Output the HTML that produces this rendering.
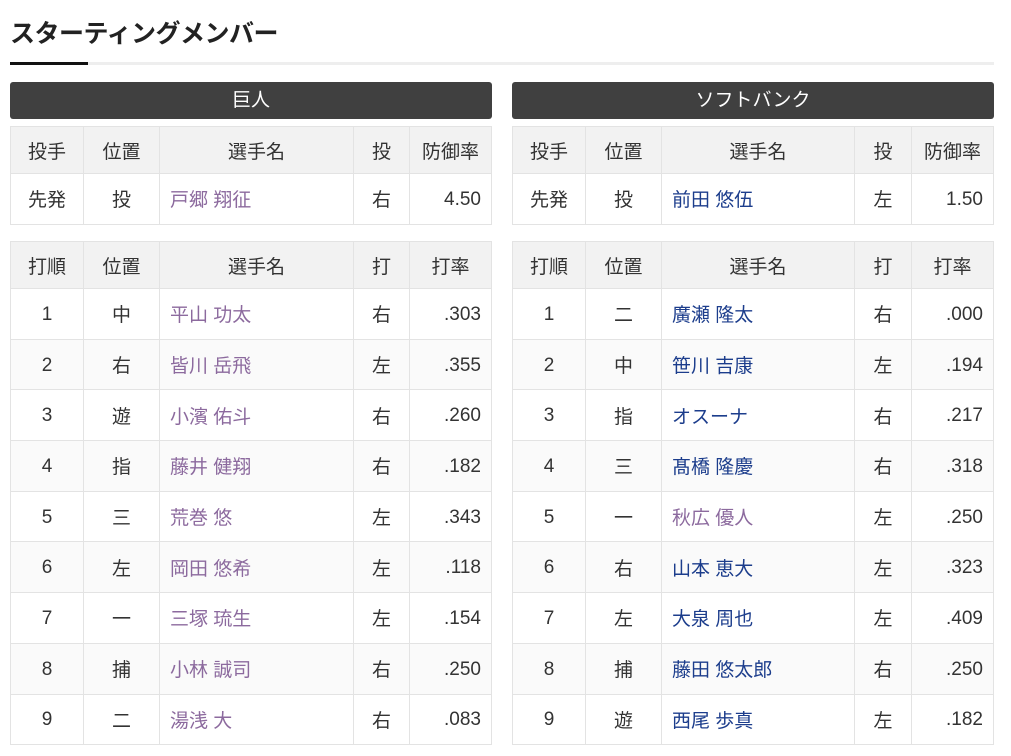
<!DOCTYPE html>
<html><head><meta charset="utf-8"><style>
body{margin:0;background:#fff;font-family:"Liberation Sans","Noto Sans CJK JP",sans-serif;color:#333;width:1011px;height:756px;overflow:hidden;position:relative}
h2{position:absolute;left:10px;top:14px;margin:0;font-size:25px;font-weight:bold;color:#222;letter-spacing:-0.5px}
.ul{position:absolute;left:10px;top:62px;width:984px;height:3px;background:#eee}
.ul i{position:absolute;left:0;top:0;width:78px;height:3px;background:#111}
.team{position:absolute;top:82px;width:482px}
.bar{height:37px;background:#404040;color:#fff;border-radius:3px;text-align:center;line-height:37px;font-size:19px}
table{border-collapse:collapse;width:482px;position:absolute;left:0;font-size:19px}
td,th{border:1px solid #e3e3e3;text-align:center;font-weight:normal;padding:0}
th{background:#f2f2f2;height:46px}
td{height:49.7px}
td span{position:relative;top:1px}
tr:nth-child(odd) td{background:#fafafa}
td.n{text-align:left;padding-left:10px}
td.r{text-align:right;padding-right:10px}
.p{color:#8c6a9e}.b{color:#1c3d8c}
</style></head><body>
<h2>スターティングメンバー</h2>
<div class="ul"><i></i></div>

<div class="team" style="left:10px">
<div class="bar">巨人</div>
<table style="top:44px"><colgroup><col style="width:73px"><col style="width:76px"><col style="width:194px"><col style="width:56px"><col></colgroup>
<tr><th>投手</th><th>位置</th><th>選手名</th><th>投</th><th>防御率</th></tr>
<tr><td style="background:#fff">先発</td><td style="background:#fff">投</td><td class="n p" style="background:#fff">戸郷 翔征</td><td style="background:#fff">右</td><td class="r" style="background:#fff"><span>4.50</span></td></tr>
</table>
<table style="top:159px"><colgroup><col style="width:73px"><col style="width:76px"><col style="width:194px"><col style="width:56px"><col></colgroup>
<tr><th>打順</th><th>位置</th><th>選手名</th><th>打</th><th>打率</th></tr>
<tr><td><span>1</span></td><td>中</td><td class="n p">平山 功太</td><td>右</td><td class="r"><span>.303</span></td></tr>
<tr><td><span>2</span></td><td>右</td><td class="n p">皆川 岳飛</td><td>左</td><td class="r"><span>.355</span></td></tr>
<tr><td><span>3</span></td><td>遊</td><td class="n p">小濱 佑斗</td><td>右</td><td class="r"><span>.260</span></td></tr>
<tr><td><span>4</span></td><td>指</td><td class="n p">藤井 健翔</td><td>右</td><td class="r"><span>.182</span></td></tr>
<tr><td><span>5</span></td><td>三</td><td class="n p">荒巻 悠</td><td>左</td><td class="r"><span>.343</span></td></tr>
<tr><td><span>6</span></td><td>左</td><td class="n p">岡田 悠希</td><td>左</td><td class="r"><span>.118</span></td></tr>
<tr><td><span>7</span></td><td>一</td><td class="n p">三塚 琉生</td><td>左</td><td class="r"><span>.154</span></td></tr>
<tr><td><span>8</span></td><td>捕</td><td class="n p">小林 誠司</td><td>右</td><td class="r"><span>.250</span></td></tr>
<tr><td><span>9</span></td><td>二</td><td class="n p">湯浅 大</td><td>右</td><td class="r"><span>.083</span></td></tr>
</table>
</div>

<div class="team" style="left:512px">
<div class="bar">ソフトバンク</div>
<table style="top:44px"><colgroup><col style="width:73px"><col style="width:76px"><col style="width:193px"><col style="width:57px"><col></colgroup>
<tr><th>投手</th><th>位置</th><th>選手名</th><th>投</th><th>防御率</th></tr>
<tr><td style="background:#fff">先発</td><td style="background:#fff">投</td><td class="n b" style="background:#fff">前田 悠伍</td><td style="background:#fff">左</td><td class="r" style="background:#fff"><span>1.50</span></td></tr>
</table>
<table style="top:159px"><colgroup><col style="width:73px"><col style="width:76px"><col style="width:193px"><col style="width:57px"><col></colgroup>
<tr><th>打順</th><th>位置</th><th>選手名</th><th>打</th><th>打率</th></tr>
<tr><td><span>1</span></td><td>二</td><td class="n b">廣瀬 隆太</td><td>右</td><td class="r"><span>.000</span></td></tr>
<tr><td><span>2</span></td><td>中</td><td class="n b">笹川 吉康</td><td>左</td><td class="r"><span>.194</span></td></tr>
<tr><td><span>3</span></td><td>指</td><td class="n b">オスーナ</td><td>右</td><td class="r"><span>.217</span></td></tr>
<tr><td><span>4</span></td><td>三</td><td class="n b">髙橋 隆慶</td><td>右</td><td class="r"><span>.318</span></td></tr>
<tr><td><span>5</span></td><td>一</td><td class="n p">秋広 優人</td><td>左</td><td class="r"><span>.250</span></td></tr>
<tr><td><span>6</span></td><td>右</td><td class="n b">山本 恵大</td><td>左</td><td class="r"><span>.323</span></td></tr>
<tr><td><span>7</span></td><td>左</td><td class="n b">大泉 周也</td><td>左</td><td class="r"><span>.409</span></td></tr>
<tr><td><span>8</span></td><td>捕</td><td class="n b">藤田 悠太郎</td><td>右</td><td class="r"><span>.250</span></td></tr>
<tr><td><span>9</span></td><td>遊</td><td class="n b">西尾 歩真</td><td>左</td><td class="r"><span>.182</span></td></tr>
</table>
</div>
</body></html>
